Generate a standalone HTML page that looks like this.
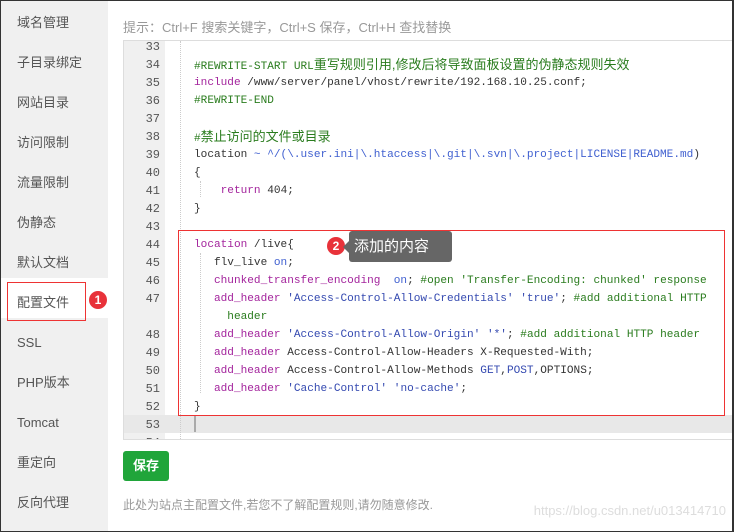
<!DOCTYPE html>
<html><head><meta charset="utf-8"><style>
*{margin:0;padding:0;box-sizing:border-box}
body{width:734px;height:532px;overflow:hidden;background:#fff;font-family:"Liberation Sans","Noto Sans CJK SC",sans-serif;position:relative}
.frame{position:absolute;left:0;top:0;width:734px;height:532px;border:1px solid #333;border-right-width:2px}
.side{position:absolute;left:1px;top:1px;width:107px;height:530px;background:#f0f0f0}
.item{position:absolute;left:17px;font-size:13px;color:#555;height:20px;line-height:20px}
.act{position:absolute;left:1px;top:278px;width:107px;height:40px;background:#fff}
.rb{position:absolute;left:7px;top:282px;width:79px;height:39px;border:1px solid #e33}
.badge{position:absolute;width:18px;height:18px;border-radius:50%;background:#e8323a;color:#fff;font-size:12px;text-align:center;line-height:18px;font-weight:bold}
.tip{position:absolute;left:123px;top:17px;font-size:13px;color:#999}
.ed{position:absolute;left:123px;top:40px;width:610px;height:400px;border:1px solid #ddd;border-right:none;overflow:hidden}
.gut{position:absolute;left:0;top:0;width:41px;height:400px;background:#f0f0f0}
.ln{position:absolute;left:0;width:36px;text-align:right;font:12px "Liberation Mono",monospace;color:#555;height:18px;line-height:18px}
.cd{position:absolute;left:70px;font:11.1px "Liberation Mono","Noto Sans CJK SC",monospace;color:#333;height:18px;line-height:18px;white-space:pre}
.zh{font-family:"Liberation Sans","Noto Sans CJK SC",sans-serif;font-size:13px}
.k{color:#a3239c}.s{color:#3449b0}.c{color:#2a7c1e}.b{color:#4060d0}
.guide{position:absolute;border-left:1px dotted #ccc}
.hl{position:absolute;left:0;top:374px;width:610px;height:18px;background:#e8e8e8}
.red2{position:absolute;left:178px;top:230px;width:547px;height:186px;border:1px solid #e33}
.tt{position:absolute;left:349px;top:231px;width:103px;height:31px;background:#666;border-radius:3px;color:#fff;font-size:15px;line-height:31px;padding-left:5px}
.tt:before{content:"";position:absolute;left:-6px;top:10px;border:6px solid transparent;border-left:0;border-right-color:#666}
.btn{position:absolute;left:123px;top:451px;width:46px;height:30px;background:#20a53a;border-radius:3px;color:#fff;font-size:13px;font-weight:bold;text-align:center;line-height:30px}
.foot{position:absolute;left:123px;top:496px;font-size:12px;color:#999}
.wm{position:absolute;right:8px;top:503px;font-size:13px;color:#ddd}
</style></head><body>
<div class="side"></div>
<div class="act"></div>
<div class="item" style="top:13px">域名管理</div>
<div class="item" style="top:53px">子目录绑定</div>
<div class="item" style="top:93px">网站目录</div>
<div class="item" style="top:133px">访问限制</div>
<div class="item" style="top:173px">流量限制</div>
<div class="item" style="top:213px">伪静态</div>
<div class="item" style="top:253px">默认文档</div>
<div class="item" style="top:293px">配置文件</div>
<div class="item" style="top:333px">SSL</div>
<div class="item" style="top:373px">PHP版本</div>
<div class="item" style="top:413px">Tomcat</div>
<div class="item" style="top:453px">重定向</div>
<div class="item" style="top:493px">反向代理</div>
<div class="rb"></div>
<div class="badge" style="left:89px;top:291px">1</div>
<div class="tip">提示：Ctrl+F 搜索关键字，Ctrl+S 保存，Ctrl+H 查找替换</div>
<div class="ed">
<div class="gut"></div>
<div class="hl"></div>
<div class="guide" style="left:56px;top:0;height:400px"></div>
<div class="guide" style="left:76px;top:140px;height:16px"></div>
<div class="guide" style="left:76px;top:212px;height:140px"></div>
<div style="position:absolute;left:70px;top:375px;width:2px;height:16px;background:#aaa"></div>
<div class="ln" style="top:-3px">33</div>
<div class="ln" style="top:15px">34</div><div class="cd c" style="top:15px">#REWRITE-START URL<span class="zh">重写规则引用,修改后将导致面板设置的伪静态规则失效</span></div>
<div class="ln" style="top:33px">35</div><div class="cd" style="top:33px"><span class="k">include</span> /www/server/panel/vhost/rewrite/192.168.10.25.conf;</div>
<div class="ln" style="top:51px">36</div><div class="cd c" style="top:51px">#REWRITE-END</div>
<div class="ln" style="top:69px">37</div>
<div class="ln" style="top:87px">38</div><div class="cd c" style="top:87px">#<span class="zh">禁止访问的文件或目录</span></div>
<div class="ln" style="top:105px">39</div><div class="cd" style="top:105px">location <span class="b">~ ^/(\.user.ini|\.htaccess|\.git|\.svn|\.project|LICENSE|README.md</span>)</div>
<div class="ln" style="top:123px">40</div><div class="cd" style="top:123px">{</div>
<div class="ln" style="top:141px">41</div><div class="cd" style="top:141px">    <span class="k">return</span> 404;</div>
<div class="ln" style="top:159px">42</div><div class="cd" style="top:159px">}</div>
<div class="ln" style="top:177px">43</div>
<div class="ln" style="top:195px">44</div><div class="cd" style="top:195px"><span class="k">location</span> /live{</div>
<div class="ln" style="top:213px">45</div><div class="cd" style="top:213px">   flv_live <span class="b">on</span>;</div>
<div class="ln" style="top:231px">46</div><div class="cd" style="top:231px">   <span class="k">chunked_transfer_encoding</span>  <span class="b">on</span>; <span class="c">#open 'Transfer-Encoding: chunked' response</span></div>
<div class="ln" style="top:249px">47</div><div class="cd" style="top:249px">   <span class="k">add_header</span> <span class="s">'Access-Control-Allow-Credentials'</span> <span class="s">'true'</span>; <span class="c">#add additional HTTP</span></div>
<div class="cd c" style="top:267px">     header</div>
<div class="ln" style="top:285px">48</div><div class="cd" style="top:285px">   <span class="k">add_header</span> <span class="s">'Access-Control-Allow-Origin'</span> <span class="s">'*'</span>; <span class="c">#add additional HTTP header</span></div>
<div class="ln" style="top:303px">49</div><div class="cd" style="top:303px">   <span class="k">add_header</span> Access-Control-Allow-Headers X-Requested-With;</div>
<div class="ln" style="top:321px">50</div><div class="cd" style="top:321px">   <span class="k">add_header</span> Access-Control-Allow-Methods <span class="s">GET</span>,<span class="s">POST</span>,OPTIONS;</div>
<div class="ln" style="top:339px">51</div><div class="cd" style="top:339px">   <span class="k">add_header</span> <span class="s">'Cache-Control'</span> <span class="s">'no-cache'</span>;</div>
<div class="ln" style="top:357px">52</div><div class="cd" style="top:357px">}</div>
<div class="ln" style="top:375px">53</div>
<div class="ln" style="top:393px">54</div>
</div>
<div class="red2"></div>
<div class="badge" style="left:327px;top:237px">2</div>
<div class="tt">添加的内容</div>
<div class="btn">保存</div>
<div class="foot">此处为站点主配置文件,若您不了解配置规则,请勿随意修改.</div>
<div class="wm">https://blog.csdn.net/u013414710</div>
<div class="frame"></div>
</body></html>
